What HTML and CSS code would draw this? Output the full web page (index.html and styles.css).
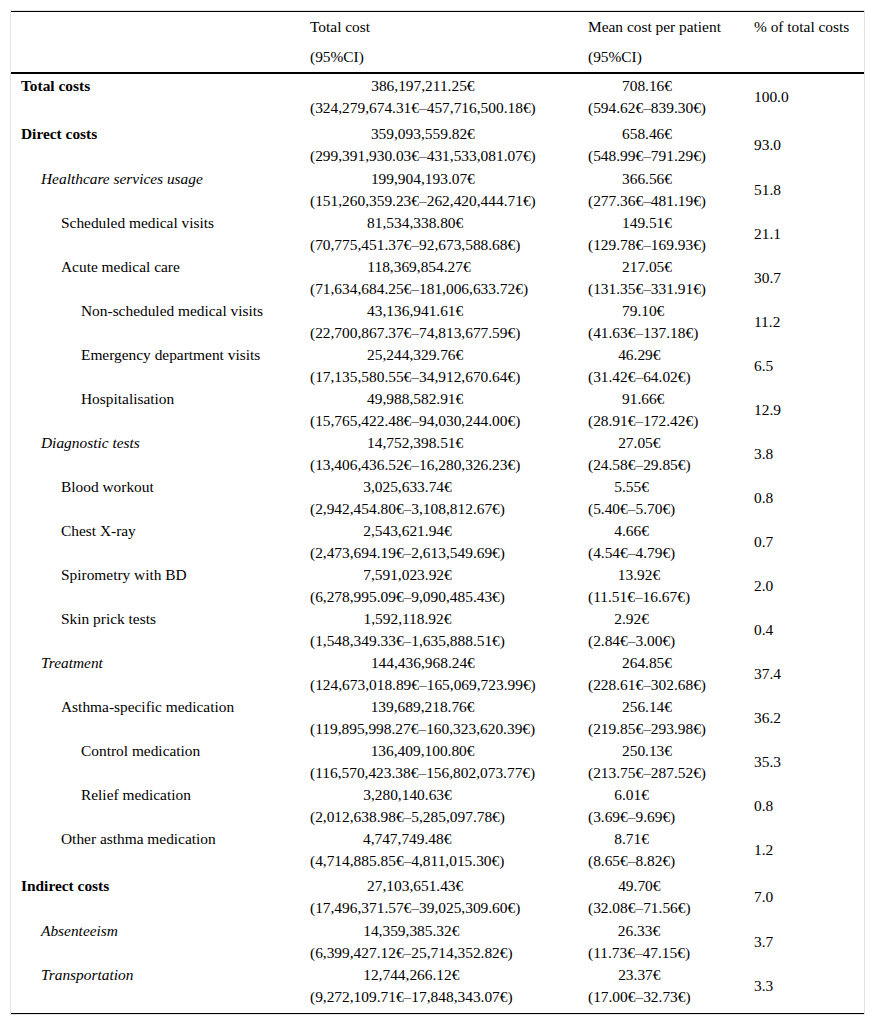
FILE: index.html
```html
<!DOCTYPE html>
<html>
<head>
<meta charset="utf-8">
<link rel="stylesheet" href="styles.css">
</head>
<body>
<div class="wrap">
<table class="costs">
<colgroup>
<col class="c1"><col class="c2"><col class="c3"><col class="c4">
</colgroup>
<thead>
<tr><th></th><th>Total cost<br>(95%CI)</th><th>Mean cost per patient<br>(95%CI)</th><th class="top">% of total costs</th></tr>
</thead>
<tbody>
<tr class="r-total"><td class="l0"><b>Total costs</b></td><td><span class="v">386,197,211.25€<br>(324,279,674.31€–457,716,500.18€)</span></td><td><span class="v">708.16€<br>(594.62€–839.30€)</span></td><td class="p">100.0</td></tr>
<tr class="r-direct"><td class="l0"><b>Direct costs</b></td><td><span class="v">359,093,559.82€<br>(299,391,930.03€–431,533,081.07€)</span></td><td><span class="v">658.46€<br>(548.99€–791.29€)</span></td><td class="p">93.0</td></tr>
<tr><td class="l1"><i>Healthcare services usage</i></td><td><span class="v">199,904,193.07€<br>(151,260,359.23€–262,420,444.71€)</span></td><td><span class="v">366.56€<br>(277.36€–481.19€)</span></td><td class="p">51.8</td></tr>
<tr><td class="l2">Scheduled medical visits</td><td><span class="v">81,534,338.80€<br>(70,775,451.37€–92,673,588.68€)</span></td><td><span class="v">149.51€<br>(129.78€–169.93€)</span></td><td class="p">21.1</td></tr>
<tr><td class="l2">Acute medical care</td><td><span class="v">118,369,854.27€<br>(71,634,684.25€–181,006,633.72€)</span></td><td><span class="v">217.05€<br>(131.35€–331.91€)</span></td><td class="p">30.7</td></tr>
<tr><td class="l3">Non-scheduled medical visits</td><td><span class="v">43,136,941.61€<br>(22,700,867.37€–74,813,677.59€)</span></td><td><span class="v">79.10€<br>(41.63€–137.18€)</span></td><td class="p">11.2</td></tr>
<tr><td class="l3">Emergency department visits</td><td><span class="v">25,244,329.76€<br>(17,135,580.55€–34,912,670.64€)</span></td><td><span class="v">46.29€<br>(31.42€–64.02€)</span></td><td class="p">6.5</td></tr>
<tr><td class="l3">Hospitalisation</td><td><span class="v">49,988,582.91€<br>(15,765,422.48€–94,030,244.00€)</span></td><td><span class="v">91.66€<br>(28.91€–172.42€)</span></td><td class="p">12.9</td></tr>
<tr><td class="l1"><i>Diagnostic tests</i></td><td><span class="v">14,752,398.51€<br>(13,406,436.52€–16,280,326.23€)</span></td><td><span class="v">27.05€<br>(24.58€–29.85€)</span></td><td class="p">3.8</td></tr>
<tr><td class="l2">Blood workout</td><td><span class="v">3,025,633.74€<br>(2,942,454.80€–3,108,812.67€)</span></td><td><span class="v">5.55€<br>(5.40€–5.70€)</span></td><td class="p">0.8</td></tr>
<tr><td class="l2">Chest X-ray</td><td><span class="v">2,543,621.94€<br>(2,473,694.19€–2,613,549.69€)</span></td><td><span class="v">4.66€<br>(4.54€–4.79€)</span></td><td class="p">0.7</td></tr>
<tr><td class="l2">Spirometry with BD</td><td><span class="v">7,591,023.92€<br>(6,278,995.09€–9,090,485.43€)</span></td><td><span class="v">13.92€<br>(11.51€–16.67€)</span></td><td class="p">2.0</td></tr>
<tr><td class="l2">Skin prick tests</td><td><span class="v">1,592,118.92€<br>(1,548,349.33€–1,635,888.51€)</span></td><td><span class="v">2.92€<br>(2.84€–3.00€)</span></td><td class="p">0.4</td></tr>
<tr><td class="l1"><i>Treatment</i></td><td><span class="v">144,436,968.24€<br>(124,673,018.89€–165,069,723.99€)</span></td><td><span class="v">264.85€<br>(228.61€–302.68€)</span></td><td class="p">37.4</td></tr>
<tr><td class="l2">Asthma-specific medication</td><td><span class="v">139,689,218.76€<br>(119,895,998.27€–160,323,620.39€)</span></td><td><span class="v">256.14€<br>(219.85€–293.98€)</span></td><td class="p">36.2</td></tr>
<tr><td class="l3">Control medication</td><td><span class="v">136,409,100.80€<br>(116,570,423.38€–156,802,073.77€)</span></td><td><span class="v">250.13€<br>(213.75€–287.52€)</span></td><td class="p">35.3</td></tr>
<tr><td class="l3">Relief medication</td><td><span class="v">3,280,140.63€<br>(2,012,638.98€–5,285,097.78€)</span></td><td><span class="v">6.01€<br>(3.69€–9.69€)</span></td><td class="p">0.8</td></tr>
<tr><td class="l2">Other asthma medication</td><td><span class="v">4,747,749.48€<br>(4,714,885.85€–4,811,015.30€)</span></td><td><span class="v">8.71€<br>(8.65€–8.82€)</span></td><td class="p">1.2</td></tr>
<tr class="r-indirect"><td class="l0"><b>Indirect costs</b></td><td><span class="v">27,103,651.43€<br>(17,496,371.57€–39,025,309.60€)</span></td><td><span class="v">49.70€<br>(32.08€–71.56€)</span></td><td class="p">7.0</td></tr>
<tr><td class="l1"><i>Absenteeism</i></td><td><span class="v">14,359,385.32€<br>(6,399,427.12€–25,714,352.82€)</span></td><td><span class="v">26.33€<br>(11.73€–47.15€)</span></td><td class="p">3.7</td></tr>
<tr class="r-last"><td class="l1"><i>Transportation</i></td><td><span class="v">12,744,266.12€<br>(9,272,109.71€–17,848,343.07€)</span></td><td><span class="v">23.37€<br>(17.00€–32.73€)</span></td><td class="p">3.3</td></tr>
</tbody>
</table>
</div>
</body>
</html>
```

FILE: styles.css
```css
html, body {
  margin: 0;
  padding: 0;
  background: #fff;
}
body {
  font-family: "Liberation Serif", "Times New Roman", serif;
  font-size: 15.4px;
  color: #000;
}
.wrap {
  margin: 10px 0 0 10px;
  width: 853px;
  border: 1px solid #e3e3e3;
}
.costs {
  width: 853px;
  table-layout: fixed;
  border-collapse: collapse;
  border-top: 1px solid #000;
  border-bottom: 1px solid #000;
  font-family: "Liberation Serif", "Times New Roman", serif;
}
.c1 { width: 289px; }
.c2 { width: 278px; }
.c3 { width: 166px; }
.c4 { width: 120px; }
.costs th {
  font-weight: normal;
  text-align: left;
  vertical-align: top;
  line-height: 30px;
  padding: 0 0 0 10px;
}
.costs thead tr {
  border-bottom: 2px solid #000;
}
.costs td {
  text-align: left;
  vertical-align: top;
  line-height: 22px;
  padding: 0 0 0 10px;
}
.costs td.p {
  vertical-align: middle;
}
.v {
  display: inline-block;
  text-align: center;
}
.costs td.l0 { padding-left: 10px; }
.costs td.l1 { padding-left: 30px; }
.costs td.l2 { padding-left: 50px; }
.costs td.l3 { padding-left: 70px; }
.r-total td { padding-top: 1px; padding-bottom: 3px; }
.r-direct td { padding-top: 1px; padding-bottom: 1px; }
.r-indirect td { padding-top: 3px; padding-bottom: 1px; }
.r-last td { padding-bottom: 5px; }
```
